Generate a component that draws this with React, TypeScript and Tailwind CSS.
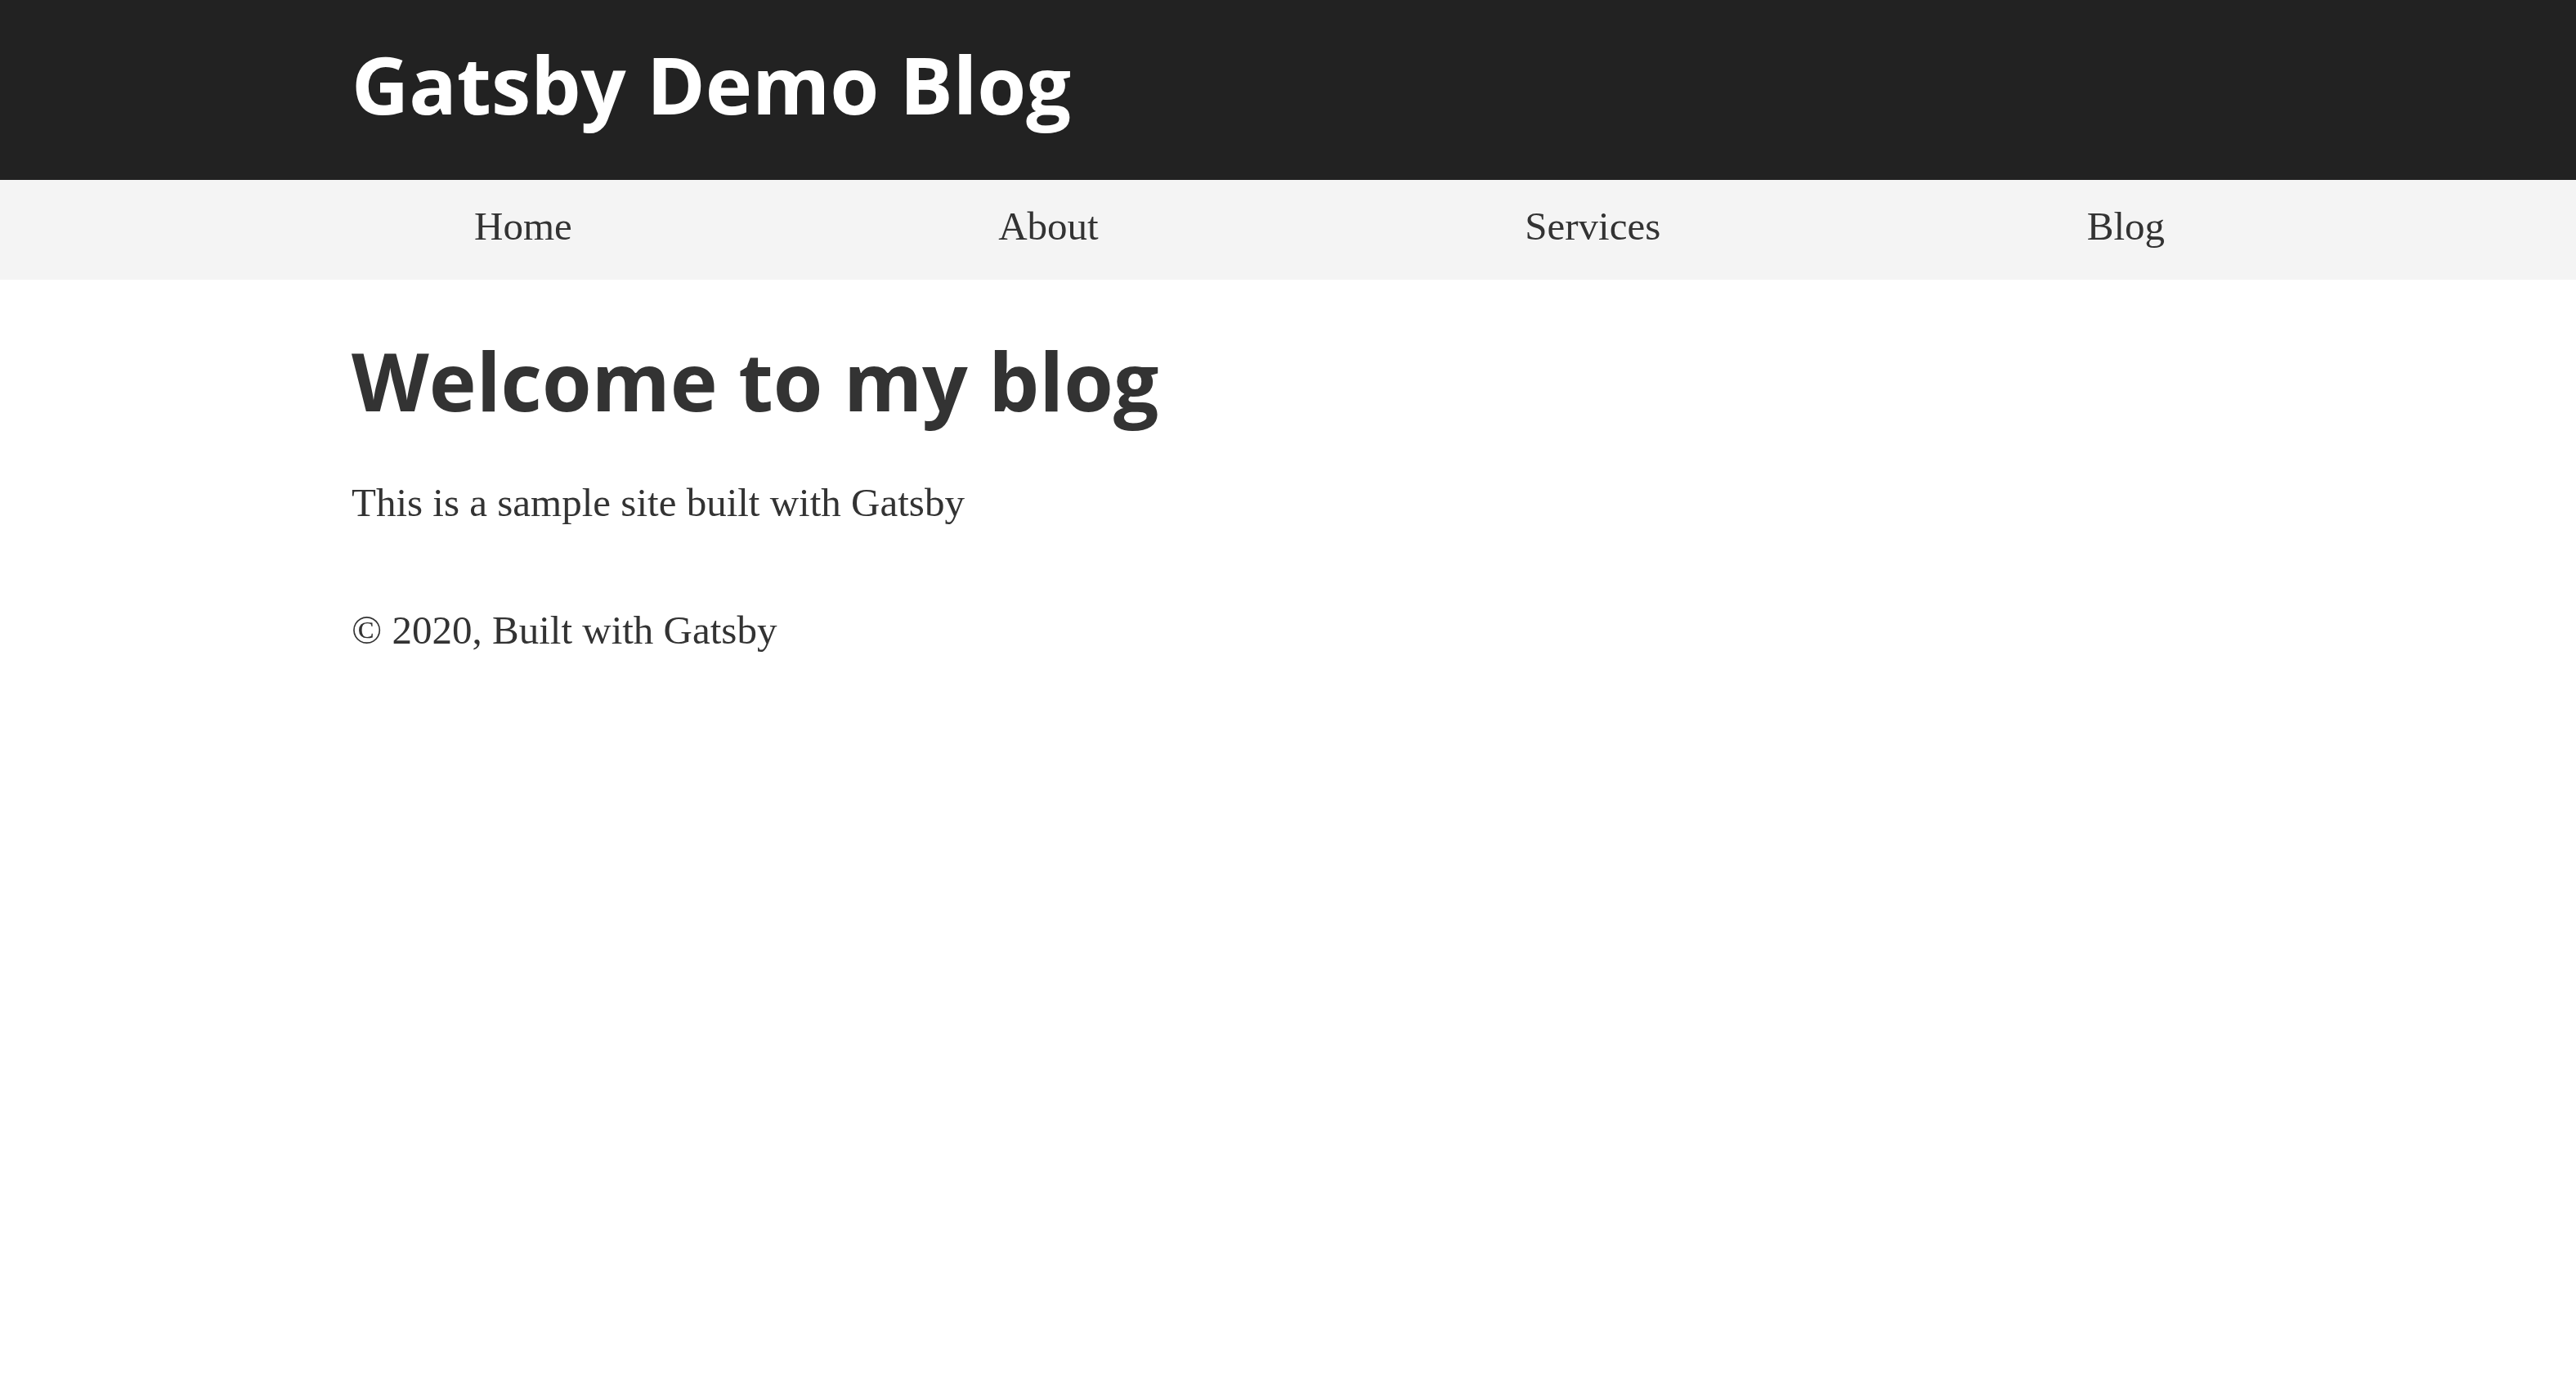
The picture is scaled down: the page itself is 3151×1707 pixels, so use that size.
import React from "react";

const navItems = ["Home", "About", "Services", "Blog"];

const serif = "font-['Liberation_Serif',serif]";

export default function App() {
  return (
    <div className="min-h-screen bg-white">
      <header className="bg-[#222222] h-[220px]">
        <div className="pl-[430px] pt-[54px]">
          <h1 className="font-['Open_Sans',sans-serif] font-bold text-[97px] leading-none text-white">
            Gatsby Demo Blog
          </h1>
        </div>
      </header>
      <nav className="bg-[#f4f4f4] h-[122px]">
        <ul className={`${serif} flex justify-between pt-[32px] pl-[580px] pr-[503px] text-[49px] leading-none text-[#333333]`}>
          {navItems.map((item) => (
            <li key={item}>
              <a href="#">{item}</a>
            </li>
          ))}
        </ul>
      </nav>
      <main className="pl-[430px] pt-[74px]">
        <h2 className="font-['Open_Sans',sans-serif] font-bold text-[98px] leading-none text-[#333333]">
          Welcome to my blog
        </h2>
        <p className={`${serif} text-[49px] leading-none text-[#333333] mt-[76px]`}>
          This is a sample site built with Gatsby
        </p>
        <footer className={`${serif} text-[49px] leading-none text-[#333333] mt-[107px]`}>
          © 2020, Built with Gatsby
        </footer>
      </main>
    </div>
  );
}
